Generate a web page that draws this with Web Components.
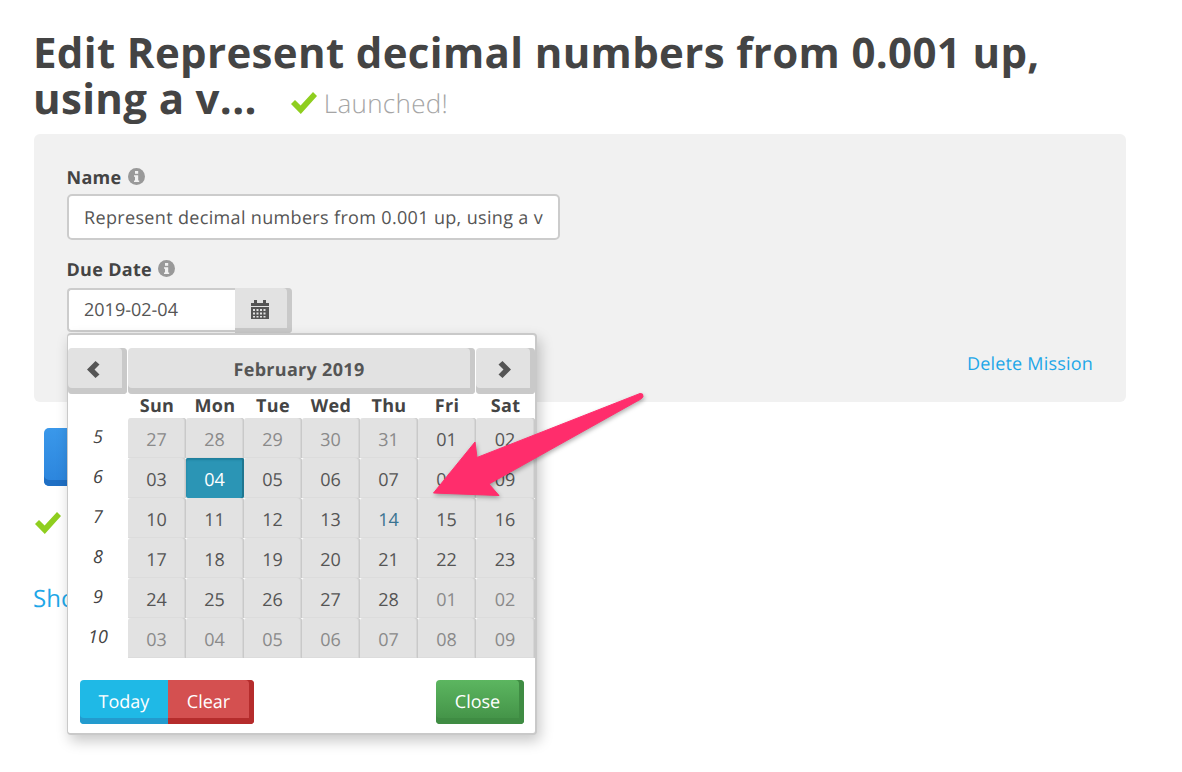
<!DOCTYPE html>
<html lang="en"><head><meta charset="utf-8"><title>Edit Mission</title>
<style>
html,body{margin:0;background:#fff;font-family:"Open Sans",sans-serif;color:#444;text-rendering:geometricPrecision}
</style></head><body>
<mission-page></mission-page>
<script>
const CHECK='<svg viewBox="0 0 26 22" width="26" height="22" aria-hidden="true"><path fill="#8fce1f" d="M0 12 4 8 9.600 13.600 22 0 26 4 9.800 22Z"/></svg>';

class InfoLabel extends HTMLElement{constructor(){super();this.attachShadow({mode:'open'}).innerHTML=`
<style>:host{display:flex;align-items:center;gap:6px;margin:1px 0 -1px -.5px;font:700 18px/24px "Open Sans",sans-serif;color:#444;letter-spacing:.3px}
svg{display:block;margin-top:-4px}</style><slot></slot>
<svg viewBox="0 0 17 17" width="17" height="17" aria-hidden="true"><circle cx="8.500" cy="8.500" r="8.500" fill="#999"/><rect x="7" y="3" width="3.200" height="2.800" fill="#f1f1f1"/><path fill="#f1f1f1" d="M6 7.200h4.200v5.200h1v1.600H6v-1.600h1V8.800H6Z"/></svg>`}}
customElements.define('info-label',InfoLabel);

class CalButton extends HTMLElement{constructor(){super();this.attachShadow({mode:'open'}).innerHTML=`
<style>:host{display:flex;align-items:center;justify-content:center;box-sizing:border-box;height:44px;font:400 18px/1 "Open Sans",sans-serif;color:#fff;padding:0 5px 0 0;background:var(--bg);box-shadow:inset -5px 0 0 var(--edge),inset 0 -6px 0 var(--edge);border-radius:var(--r,0)}</style><slot></slot>`}}
customElements.define('cal-button',CalButton);

class CalNav extends HTMLElement{constructor(){super();this.attachShadow({mode:'open'}).innerHTML=`
<style>:host{display:flex;align-items:center;justify-content:center;box-sizing:border-box;height:46px;padding:0 5px 3px 0;background:#e2e2e2;color:#555;font:700 18px/1 "Open Sans",sans-serif;letter-spacing:.3px;border-radius:4px;box-shadow:inset -5px 0 0 #c9c9c9,inset 0 -6px 0 #c9c9c9}</style><slot></slot>`}}
customElements.define('cal-nav',CalNav);

class CalGrid extends HTMLElement{constructor(){super();
const heads=['Sun','Mon','Tue','Wed','Thu','Fri','Sat'];
const weeks=[[5,['27','28','29','30','31','01','02']],[6,['03','04','05','06','07','08','09']],[7,['10','11','12','13','14','15','16']],[8,['17','18','19','20','21','22','23']],[9,['24','25','26','27','28','01','02']],[10,['03','04','05','06','07','08','09']]];
const muted=(w,i)=>(w===5&&i<5)||(w===9&&i>4)||w===10;
let h='<span></span>'+heads.map(d=>`<b>${d}</b>`).join('');
for(const [w,ds] of weeks){h+=`<i>${w}</i>`;ds.forEach((d,i)=>{let c='d';if(muted(w,i))c+=' m';if(w===6&&i===1)c+=' s';if(w===7&&i===4)c+=' t';h+=`<span class="${c}">${d}</span>`})}
this.attachShadow({mode:'open'}).innerHTML=`
<style>:host{display:grid;grid-template-columns:60px repeat(6,58px) 59px;grid-template-rows:24px repeat(6,40px);font:400 18px/1 "Open Sans",sans-serif;color:#555}
b{display:flex;align-items:center;justify-content:center;font-weight:700;color:#444;letter-spacing:.3px}
i{display:flex;align-items:center;justify-content:center;padding-bottom:3px;color:#444}
.d{display:flex;align-items:center;justify-content:center;background:#e2e2e2;box-shadow:inset -1px 0 0 #c9c9c9,inset -2px 0 0 #d6d6d6,inset 0 -1px 0 #dcdcdc;border-radius:3px 3px 0 0;padding:4px 1px 0 0}
.m{color:#8a8a8a}.t{color:#3a7391}
.s{background:#2b95b5;color:#fff;box-shadow:inset -2px 0 0 #1f7690,inset 0 2px 2px #1f7f9c;border-radius:2px}</style>${h}`}}
customElements.define('cal-grid',CalGrid);

class DatePopup extends HTMLElement{constructor(){super();this.attachShadow({mode:'open'}).innerHTML=`
<style>:host{position:absolute;left:0;top:45px;z-index:2;box-sizing:border-box;width:470px;height:402px;background:#fff;border:2px solid #c9c9c9;border-left-width:1px;border-radius:4px;box-shadow:3px 6px 14px rgba(0,0,0,.22);padding:13px 0 0 0}
.nav{display:grid;grid-template-columns:59px 347px 59px;gap:1px}
#prev{padding-right:9px}#next{padding-right:3px}
.foot{display:flex;justify-content:space-between;padding:22px 11px 0 12px}
.l{display:flex}
#today{width:88px;--bg:#1fb9e6;--edge:#239bce;--r:4px 0 0 4px;box-shadow:inset 0 -6px 0 #239bce;padding-right:0}
#clear{width:86px;--bg:#d45050;--edge:#b52c2c;--r:0 4px 4px 0}
#close{width:88px;--bg:linear-gradient(#5cb660,#418f45);--edge:#3f8c43;--r:4px}
svg{display:block}</style>
<div class="nav"><cal-nav id="prev"><svg viewBox="0 0 13 17" width="13" height="17" aria-hidden="true"><path fill="#555" d="M8.500 0 12.500 3.500 7.500 8.500 12.500 13.500 8.500 17 0 8.500Z"/></svg></cal-nav><cal-nav>February 2019</cal-nav><cal-nav id="next"><svg viewBox="0 0 13 17" width="13" height="17" aria-hidden="true"><path fill="#555" d="M4.500 0 .5 3.500 5.500 8.500 .5 13.500 4.500 17 13 8.500Z"/></svg></cal-nav></div>
<cal-grid></cal-grid>
<div class="foot"><div class="l"><cal-button id="today">Today</cal-button><cal-button id="clear">Clear</cal-button></div><cal-button id="close">Close</cal-button></div>`}}
customElements.define('date-popup',DatePopup);

class DateField extends HTMLElement{constructor(){super();this.attachShadow({mode:'open'}).innerHTML=`
<style>:host{display:flex;position:relative;width:225px;height:44px;font:400 18px/1 "Open Sans",sans-serif;color:#555}
.v{box-sizing:border-box;width:169px;height:44px;display:flex;align-items:center;padding:0 0 0 15px;background:#fff;border:2px solid #ccc;border-right:0;border-radius:4px 0 0 4px}
.b{box-sizing:border-box;width:57px;height:45px;display:flex;align-items:center;justify-content:center;padding:0 7px 3px 0;background:#e2e2e2;border-radius:0 4px 4px 0;box-shadow:inset -5px 0 0 #c9c9c9,inset 0 -5px 0 #c9c9c9}
svg{display:block}</style>
<div class="v">2019-02-04</div><div class="b"><svg viewBox="0 0 18 19" width="18" height="19" aria-hidden="true"><path fill="#555" d="M0 3h3V0h3v3h6V0h3v3h3v3H0Z"/><path fill="#555" fill-rule="evenodd" d="M0 7h18v12H0ZM2 9v2h2V9Zm3.500 0v2h2V9Zm3.500 0v2h2V9Zm3.500 0v2h2V9ZM2 12.500v2h2v-2Zm3.500 0v2h2v-2Zm3.500 0v2h2v-2Zm3.500 0v2h2v-2ZM2 16v1.500h2V16Zm3.500 0v1.500h2V16Zm3.500 0v1.500h2V16Zm3.500 0v1.500h2V16Z"/></svg></div><date-popup></date-popup>`}}
customElements.define('date-field',DateField);

class MissionPage extends HTMLElement{constructor(){super();this.attachShadow({mode:'open'}).innerHTML=`
<style>:host{display:block;position:relative;width:1182px;height:772px;overflow:hidden;box-sizing:border-box;padding:30px 56px 0 34px;font-family:"Open Sans",sans-serif;color:#444}
h1{display:flex;flex-wrap:wrap;align-items:flex-start;margin:0 0 12px -1px;font:700 42px/46px "Open Sans",sans-serif;letter-spacing:.35px;color:#444}
.st{display:inline-flex;align-items:center;gap:7px;margin-left:34px;font:300 26px/46px "Open Sans",sans-serif;letter-spacing:.3px;color:#a5a5a5;height:46px;padding-top:7px;box-sizing:border-box}
.panel{box-sizing:border-box;height:268px;background:#f1f1f1;border-radius:6px;padding:31px 33px 0}
.name{box-sizing:border-box;width:493px;height:46px;margin:5px 0 18px;background:#fff;border:2px solid #ccc;border-radius:5px;display:flex;align-items:center;padding:2px 15px 0;font:400 18px/1 "Open Sans",sans-serif;letter-spacing:.34px;color:#555;white-space:nowrap;overflow:hidden}
date-field{margin-top:7px}
.row{display:flex;justify-content:flex-end}
.del{font:400 18px/24px "Open Sans",sans-serif;letter-spacing:.2px;color:#1ea7e8;margin-top:20px}
.go{width:180px;height:58px;margin:26px 0 0 10px;border-radius:5px;background:linear-gradient(#3a98ea,#2b84dc);box-shadow:inset 0 -6px 0 #1f6fc4}
.ok{margin:26px 0 0 1px;height:26px}
.ok svg{display:block}
.show{margin:45px 0 0 -1px;font:400 24px/32px "Open Sans",sans-serif;color:#1ea7e8}
.arrow{position:absolute;left:420px;top:380px;z-index:3;overflow:visible;filter:drop-shadow(1px 2px 2px rgba(0,0,0,.3))}</style>
<h1><span>Edit Represent decimal numbers from 0.001 up,</span><span>using a v...</span><span class="st">${CHECK}Launched!</span></h1>
<section class="panel">
<info-label>Name</info-label>
<div class="name">Represent decimal numbers from 0.001 up, using a v</div>
<info-label>Due Date</info-label>
<date-field></date-field>
<div class="row"><div class="del">Delete Mission</div></div>
</section>
<div class="go"></div>
<div class="ok">${CHECK}</div>
<div class="show">Sho</div>
<svg class="arrow" width="230" height="125" viewBox="420 380 230 125" aria-hidden="true"><path fill="#ff2d6c" stroke="#ff2d6c" stroke-linejoin="round" stroke-width="1" d="M433.500 493 475 442 477 457.500 640 393.500Q643.500 393 643 396.500Q642.500 398 640 399.500L489 484 499 495.500Z"/></svg>`}}
customElements.define('mission-page',MissionPage);
</script></body></html>
